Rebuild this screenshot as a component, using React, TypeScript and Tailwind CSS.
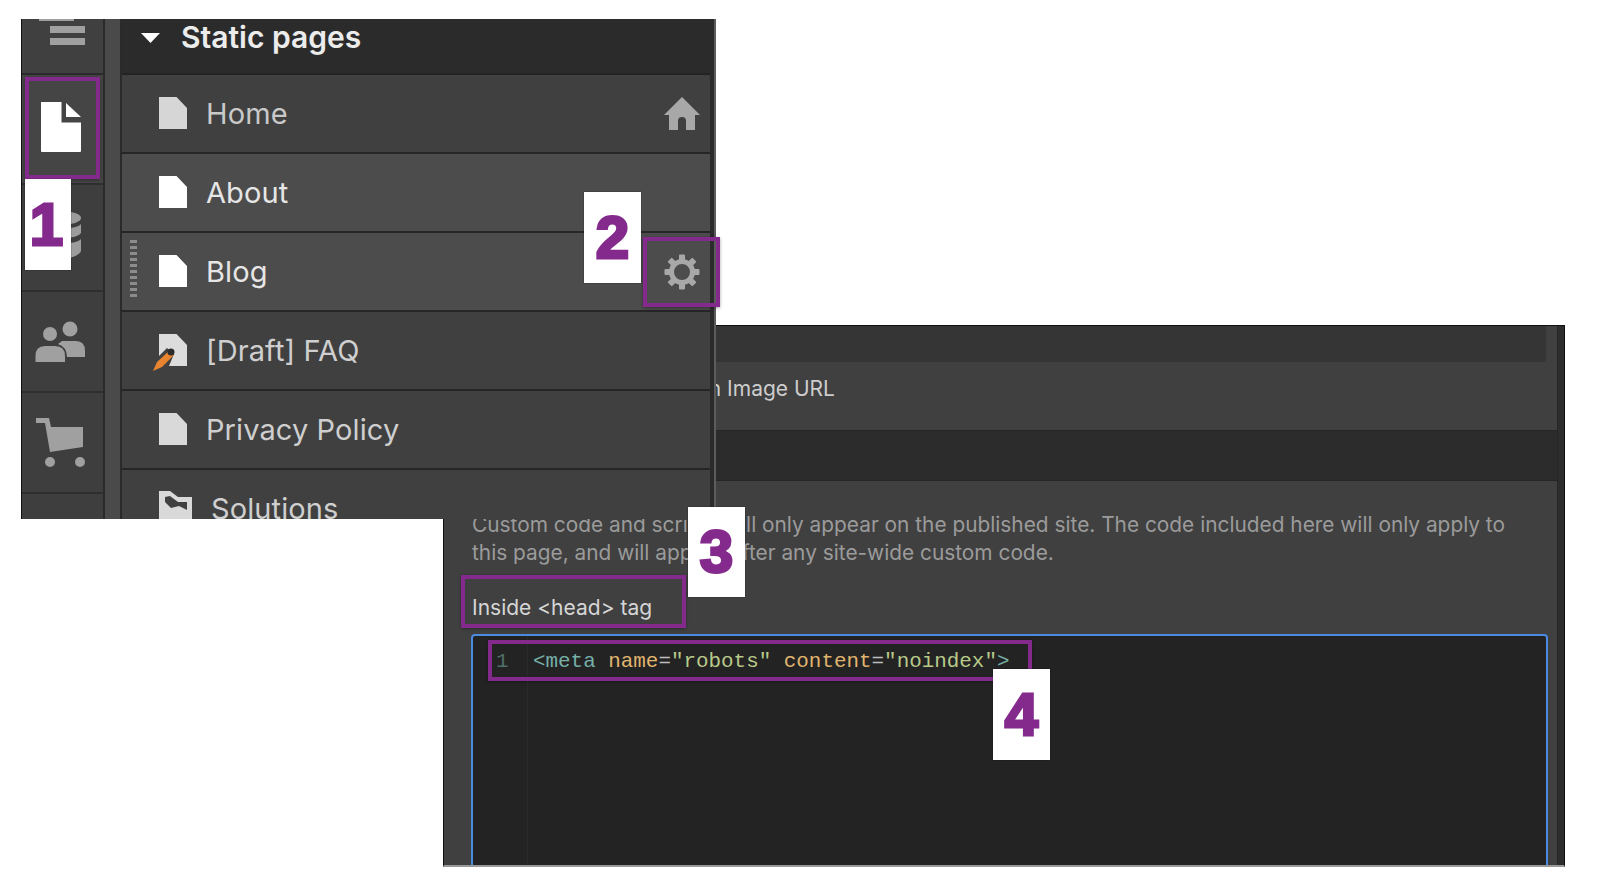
const PURPLE_BOX = "absolute border-[4px] border-[#852a8d] shadow-[0_1px_3px_rgba(0,0,0,0.35)]";
const TAG =
  "absolute bg-white flex items-center justify-center font-['Liberation_Sans',Arial,sans-serif] font-bold text-[60px] leading-none text-[#852a8d] [-webkit-text-stroke:3px_#852a8d] shadow-[0_0_1px_rgba(0,0,0,0.7)]";

const DocIcon = ({ color }: { color: string }) => (
  <svg width="28" height="32" viewBox="0 0 28 32" className="shrink-0 -mt-px">
    <path d="M0 0H17.5L28 11V32H0Z" fill={color} />
  </svg>
);

const DraftIcon = () => (
  <svg width="38" height="38" viewBox="0 0 38 38" className="shrink-0 -ml-[6px] mt-[4px]">
    <path d="M6 0H23.5L34 11V32H16L21 20L14 14L6 22Z" fill="#dcdcdc" />
    <path d="M0 37L4 28L16 17L21 21L9 33Z" fill="#e8842f" />
    <circle cx="18" cy="18" r="3.5" fill="#2b2b2b" />
  </svg>
);

const FolderIcon = () => (
  <svg width="33" height="36" viewBox="0 0 33 36" className="shrink-0">
    <path d="M0 0H11L19 6H33V36H0Z" fill="#d9d9d9" />
    <path d="M6 6L11 5L19 11H28V19L20 15L12 17L6 11Z" fill="#404040" />
  </svg>
);

const HomeIcon = () => (
  <svg width="36" height="33" viewBox="0 0 36 33" className="shrink-0">
    <path d="M18 0L36 18H31V33H22V24A4 4 0 0 0 14 24V33H5V18H0Z" fill="#a8a8a8" />
  </svg>
);

const GearIcon = () => (
  <svg width="36" height="36" viewBox="0 0 36 36" className="ml-auto shrink-0">
    <circle cx="18" cy="18" r="10.5" fill="none" stroke="#a8a8a8" strokeWidth="5" />
    {[0, 45, 90, 135, 180, 225, 270, 315].map((deg) => (
      <rect key={deg} x="15" y="0.5" width="6" height="7" rx="1" fill="#a8a8a8" transform={`rotate(${deg} 18 18)`} />
    ))}
  </svg>
);

const PageRow = ({
  label,
  icon,
  light,
  textClass,
  gapClass,
  children,
}: {
  label: string;
  icon: React.ReactNode;
  light?: boolean;
  textClass: string;
  gapClass?: string;
  children?: React.ReactNode;
}) => (
  <div
    className={`relative h-[79px] shrink-0 flex items-center pl-[37px] pr-[10px] border-b-2 border-[#262626] ${
      light ? "bg-[#4c4c4c]" : "bg-[#404040]"
    }`}
  >
    <div className={`flex items-center ${gapClass ?? "gap-[19px]"}`}>
      {icon}
      <span className={`text-[29px] leading-none tracking-[0.1px] ${textClass}`}>{label}</span>
    </div>
    {children}
  </div>
);

const SideCell = ({ className, children }: { className: string; children?: React.ReactNode }) => (
  <div className={`shrink-0 flex items-center justify-center border-b-2 border-[#2e2e2e] bg-[#3e3e3e] ${className}`}>
    {children}
  </div>
);

const PagesPanel = () => (
  <div className="absolute left-[21px] top-[19px] w-[695px] h-[500px] flex overflow-hidden bg-[#4a4a4a] border-l border-[#111] font-['Inter',sans-serif]">
    {/* icon rail */}
    <div className="w-[83px] shrink-0 flex flex-col border-r-2 border-[#2a2a2a]">
      <div className="h-[56px] shrink-0 relative bg-[#404040] border-b-2 border-[#2a2a2a] flex flex-col items-end pr-[18px] pt-[7px] gap-[5px]">
        <div className="absolute left-[17px] top-0 w-[35px] h-[2px] bg-[#a0a0a0]" />
        <div className="w-[35px] h-[7px] bg-[#a0a0a0]" />
        <div className="w-[35px] h-[7px] bg-[#a0a0a0]" />
      </div>
      <SideCell className="h-[110px] bg-[#454545]">
        <svg width="40" height="50" viewBox="0 0 40 50" className="-mt-[4px] -ml-[4px]">
          <path d="M0 0H20.5V20.5H40V49Q40 50 39 50H1Q0 50 0 49Z" fill="#fff" />
          <path d="M25 1L40 15H25Z" fill="#fff" />
        </svg>
      </SideCell>
      <SideCell className="h-[107px]">
        <svg width="40" height="48" viewBox="0 0 40 48" className="-mt-[6px] -ml-[4px]">
          <ellipse cx="20" cy="7" rx="20" ry="7" fill="#9c9c9c" />
          <path d="M0 13C4 19 36 19 40 13V22C36 29 4 29 0 22Z" fill="#9c9c9c" />
          <path d="M0 28C4 34 36 34 40 28V40C36 50 4 50 0 40Z" fill="#9c9c9c" />
        </svg>
      </SideCell>
      <SideCell className="h-[101px]">
        <svg width="50" height="42" viewBox="0 0 50 42" className="-ml-[6px]">
          <circle cx="15" cy="13" r="7" fill="#a0a0a0" />
          <path d="M.5 41V35Q.5 25 10 25H20Q30 25 30 35V41Z" fill="#a0a0a0" />
          <circle cx="35" cy="8" r="7.5" fill="#a0a0a0" />
          <path d="M27 20H41Q50 20 50 30V36H32Q32 26 23 23Z" fill="#a0a0a0" />
        </svg>
      </SideCell>
      <SideCell className="h-[101px]">
        <svg width="50" height="52" viewBox="0 0 50 52" className="-ml-[6px]">
          <path d="M1 1H14L16 10H48V30L15 35L10 6H1Z" fill="#a0a0a0" />
          <circle cx="15" cy="45" r="5" fill="#a0a0a0" />
          <circle cx="45" cy="45" r="5" fill="#a0a0a0" />
        </svg>
      </SideCell>
      <div className="flex-1 bg-[#3e3e3e]" />
    </div>

    {/* gutter */}
    <div className="w-[17px] shrink-0 bg-[#4a4a4a] border-r-2 border-[#2a2a2a]" />

    {/* page list */}
    <div className="w-[588px] shrink-0 flex flex-col">
      <div className="h-[56px] shrink-0 flex items-center pl-[19px] pb-[16px] gap-[21px] bg-[#2b2b2b] border-b-2 border-[#232323]">
        <svg width="19" height="10" viewBox="0 0 19 10">
          <path d="M0 0H19L9.5 10Z" fill="#fff" />
        </svg>
        <span className="text-[30px] leading-none font-semibold text-[#ececec] -mt-[2px]">Static pages</span>
      </div>
      <PageRow label="Home" icon={<DocIcon color="#d6d6d6" />} textClass="text-[#c9c9c9]">
        <div className="ml-auto">
          <HomeIcon />
        </div>
      </PageRow>
      <PageRow label="About" light icon={<DocIcon color="#ffffff" />} textClass="text-[#e6e6e6]" />
      <PageRow label="Blog" light icon={<DocIcon color="#ffffff" />} textClass="text-[#e6e6e6]">
        <div className="absolute left-[8px] top-[7px] h-[60px] w-[7px] bg-[repeating-linear-gradient(to_bottom,#8c8c8c_0,#8c8c8c_3px,transparent_3px,transparent_6px)]" />
        <GearIcon />
      </PageRow>
      <PageRow label="[Draft] FAQ" icon={<DraftIcon />} gapClass="gap-[15px]" textClass="text-[#cfcfcf]" />
      <PageRow label="Privacy Policy" icon={<DocIcon color="#d9d9d9" />} textClass="text-[#cfcfcf]" />
      <PageRow label="Solutions" icon={<FolderIcon />} gapClass="gap-[19px]" textClass="text-[#cfcfcf]" />
    </div>

    {/* right edge */}
    <div className="flex-1 bg-[#2b2b2b] border-r-2 border-[#5c5c5c]" />
  </div>
);

const CodeLine = () => (
  <div className="flex items-center h-[38px] mt-[7px] font-['Liberation_Mono',monospace] text-[20.9px] leading-none whitespace-pre">
    <span className="w-[60px] pl-[23px] shrink-0 text-[#4f6f69]">1</span>
    <span>
      <span className="text-[#76b0a8]">&lt;meta</span> <span className="text-[#e0b56e]">name</span>
      <span className="text-[#bdbdbd]">=</span>
      <span className="text-[#b8c98a]">"robots"</span> <span className="text-[#e0b56e]">content</span>
      <span className="text-[#bdbdbd]">=</span>
      <span className="text-[#b8c98a]">"noindex"</span>
      <span className="text-[#76b0a8]">&gt;</span>
    </span>
  </div>
);

const SettingsPanel = () => (
  <div className="absolute left-[443px] top-[325px] w-[1122px] h-[542px] flex overflow-hidden bg-[#404040] border-t border-l border-r border-[#111] border-b-2 border-b-[#999] font-['Inter',sans-serif]">
    <div className="w-[1113px] shrink-0 flex flex-col">
      <div className="mr-[11px] h-[36px] shrink-0 bg-[#353535] rounded-br-[3px]" />
      <div className="h-[70px] shrink-0 flex items-center justify-end pr-[722px] pb-[14px] -mt-[2px] text-[21px] text-[#cdcdcd] leading-none whitespace-nowrap">
        Open Graph Image URL
      </div>
      <div className="h-[51px] shrink-0 bg-[#2c2c2c] border-y border-[#262626]" />
      <div className="flex-1 min-h-0 pl-[28px] pt-[30px] flex flex-col">
        <p className="w-[1060px] text-[20.85px] leading-[28px] text-[#9b9b9b]">
          Custom code and scripts will only appear on the published site. The code included here will only apply to
          this page, and will appear after any site-wide custom code.
        </p>
        <div className="mt-[30px] text-[21px] leading-none text-[#d6d6d6]">Inside &lt;head&gt; tag</div>
        <div className="mt-[16px] flex-1 -ml-px mr-[9px] -mb-[8px] bg-[#232323] border-2 border-[#4a8ae0] rounded-t-[4px] relative">
          <div className="absolute left-[54px] top-0 bottom-0 w-px bg-[#2a2a2a]" />
          <CodeLine />
        </div>
      </div>
    </div>
    <div className="flex-1 bg-[#2d2d2d] border-l border-[#262626]" />
  </div>
);

const App = () => {
  return (
    <div className="relative w-full h-[885px] overflow-hidden bg-white">
      <SettingsPanel />
      <PagesPanel />

      <div className={`${PURPLE_BOX} left-[25px] top-[77px] w-[75px] h-[102px]`} />
      <div className={`${TAG} left-[25px] top-[179px] w-[46px] h-[91px] pr-[3px]`}>1</div>

      <div className={`${PURPLE_BOX} left-[643px] top-[237px] w-[77px] h-[70px]`} />
      <div className={`${TAG} left-[584px] top-[192px] w-[57px] h-[91px]`}>2</div>

      <div className={`${PURPLE_BOX} left-[461px] top-[575px] w-[225px] h-[53px]`} />
      <div className={`${TAG} left-[688px] top-[507px] w-[57px] h-[90px]`}>3</div>

      <div className={`${PURPLE_BOX} left-[488px] top-[640px] w-[544px] h-[41px]`} />
      <div className={`${TAG} left-[993px] top-[669px] w-[57px] h-[91px]`}>4</div>
    </div>
  );
};

export default App;
